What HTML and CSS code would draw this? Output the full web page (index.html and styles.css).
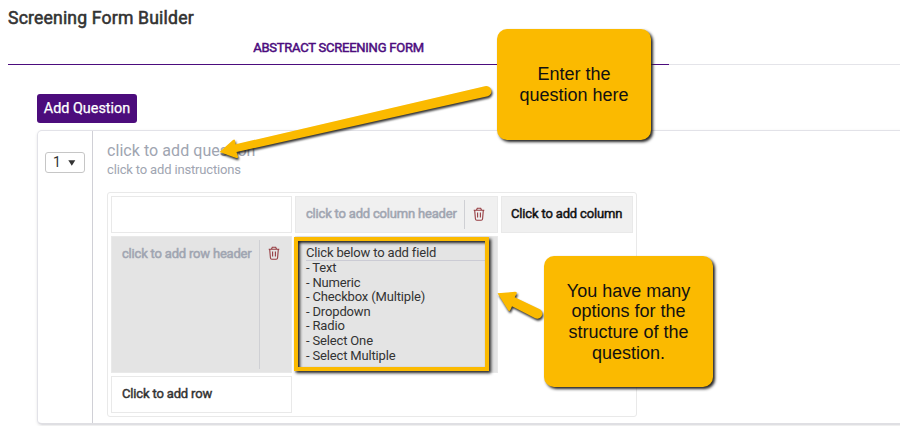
FILE: index.html
```html
<!DOCTYPE html>
<html lang="en">
<head>
<meta charset="utf-8">
<title>Screening Form Builder</title>
<link rel="stylesheet" href="styles.css">
</head>
<body>
<h1 class="title"><span>Screening Form Builder</span></h1>
<nav class="tabs"><div class="tab"><span>ABSTRACT SCREENING FORM</span></div></nav>
<button class="add"><span>Add Question</span></button>
<section class="card">
  <div class="order"><div class="select"><span>1</span><svg width="8" height="6" viewBox="0 0 8 6"><path d="M.3 .3h7L3.8 5.8z" fill="#333"/></svg></div></div>
  <div class="content">
    <div class="question"><span>click to add question</span></div>
    <div class="instructions"><span>click to add instructions</span></div>
    <div class="grid">
      <div class="cell"></div>
      <div class="cell head split">
        <div class="label muted"><span>click to add column header</span></div>
        <div class="trash"><svg width="12" height="14" viewBox="0 0 12 14"><path d="M.7 3.200h10.600M3.500 3L4.300 1.300h3.400L8.500 3M1.700 3.400l.7 8.300q.1 1.500 1.500 1.500h4.200q1.400 0 1.500-1.500l.7-8.300M4.600 5.400v5.200M7.400 5.400v5.200"/></svg></div>
      </div>
      <div class="cell head addcol"><span>Click to add column</span></div>
      <div class="cell body split">
        <div class="label muted"><span>click to add row header</span></div>
        <div class="trash"><svg width="12" height="14" viewBox="0 0 12 14"><path d="M.7 3.200h10.600M3.500 3L4.300 1.300h3.400L8.500 3M1.700 3.400l.7 8.300q.1 1.500 1.500 1.500h4.200q1.400 0 1.500-1.500l.7-8.300M4.600 5.400v5.200M7.400 5.400v5.200"/></svg></div>
      </div>
      <div class="cell body fields">
        <div class="fields-title"><span>Click below to add field</span></div>
        <div class="field">- Text</div>
        <div class="field">- Numeric</div>
        <div class="field">- Checkbox (Multiple)</div>
        <div class="field">- Dropdown</div>
        <div class="field">- Radio</div>
        <div class="field">- Select One</div>
        <div class="field">- Select Multiple</div>
        <div class="highlight"></div>
      </div>
      <div></div>
      <div class="cell addrow"><span>Click to add row</span></div>
    </div>
  </div>
</section>
<svg class="arrows" width="900" height="426" viewBox="0 0 900 426">
  <path d="M219.500 152L233 140Q234.600 138.600 235 140.500L235.600 144.300L484.800 86.200A5.100 5.100 0 0 1 487.700 96.200L236.500 152L238 156.500Q238.300 158.500 236.200 157.900Z"/>
  <path d="M497.500 293.300L515 291.800Q517.500 291.800 516.600 293.800L514.700 297.200L539.300 308.900A5.100 5.100 0 0 1 535.300 318.300L512 306.200L510.300 310Q509.300 312 508 310Z"/>
</svg>
<div class="callout first">Enter the<br>question here</div>
<div class="callout second">You have many<br>options for the<br>structure of the<br>question.</div>
</body>
</html>
```
FILE: styles.css
```css
* { box-sizing: border-box; }
body {
  margin: 0;
  width: 900px;
  height: 426px;
  overflow: hidden;
  position: relative;
  background: #fff;
  color: #333;
  font: 13px/15px Roboto, "Liberation Sans", sans-serif;
  letter-spacing: -.16px;
}
.title {
  margin: 0;
  padding: 7px 0 0 8px;
  height: 37px;
  font-size: 17.6px;
  font-weight: 400;
  line-height: 22px;
  letter-spacing: .18px;
  -webkit-text-stroke: .55px #333;
}
.tabs {
  margin-left: 8px;
  height: 28px;
  border-bottom: 1px solid #e4e4e9;
}
.tab {
  width: 661px;
  height: 28px;
  padding-top: 3px;
  text-align: center;
  color: #4c0c7e;
  letter-spacing: -.24px;
  border-bottom: 1px solid #4c0c7e;
  -webkit-text-stroke: .5px #4c0c7e;
}
.add {
  display: block;
  width: 100px;
  height: 29px;
  margin: 29px 0 7px 37px;
  padding: 0;
  border: 0;
  border-radius: 3px;
  background: #4c0c7c;
  color: #fff;
  font: 14.4px/28px Roboto, sans-serif;
  -webkit-text-stroke: .25px #fff;
}
.card {
  display: flex;
  margin-left: 37px;
  width: 875px;
  height: 295px;
  border: 1px solid #e2e2e8;
  border-bottom: 2px solid #dfdfe3;
  border-radius: 5px;
  box-shadow: 0 1px 3px rgba(0, 0, 0, .1);
}
.order {
  width: 55px;
  padding: 21px 0 0 7px;
  border-right: 1px solid #d0d0d6;
}
.select {
  display: flex;
  align-items: center;
  justify-content: space-between;
  width: 40px;
  height: 21px;
  padding: 0 8px 0 7px;
  border: 1px solid #c6c6c6;
  border-radius: 3px;
  font-size: 14px;
}
.content { padding: 9px 0 0 14px; }
.question {
  height: 21px;
  color: #a0a5b1;
  font-size: 16px;
  line-height: 21px;
  letter-spacing: .06px;
}
.instructions {
  height: 31px;
  color: #a0a5b1;
  line-height: 17px;
}
.grid {
  display: grid;
  grid-template-columns: 181px 203px 132px;
  grid-template-rows: 37px 137px 37px;
  gap: 3px;
  width: 530px;
  height: 225px;
  padding: 3px;
  border: 1px solid #e9e9e9;
  border-radius: 3px;
}
.cell { border: 1px solid #e9e9e9; }
.head { background: #f0f0f0; }
.body { background: #e4e4e4; }
.split { display: flex; padding: 3px 0; }
.label {
  flex: 1;
  padding: 6px 0 0 10px;
  border-right: 1px solid #cfd0d4;
  white-space: nowrap;
}
.muted {
  color: #a0a5b1;
  letter-spacing: -.19px;
  -webkit-text-stroke: .5px #a0a5b1;
}
.trash { width: 32px; padding: 7px 0 0 8px; }
.trash svg {
  display: block;
  fill: none;
  stroke: #963d42;
  stroke-width: 1.1;
}
.body .trash { width: 31px; padding-top: 6px; }
.addcol { padding: 9px 0 0 9px; color: #111; -webkit-text-stroke: .45px #111; }
.addrow { padding: 9px 0 0 10px; -webkit-text-stroke: .45px #333; }
.fields { position: relative; padding: 8px 12px 0 10px; }
.fields-title {
  height: 16px;
  border-bottom: 1px solid #cbcbd4;
}
.field { height: 14.6px; line-height: 14.6px; }
.highlight {
  position: absolute;
  left: -2px;
  top: 0;
  width: 195px;
  height: 134px;
  border: 4px solid #fbba00;
  box-shadow: 2px 2px 3px #222, inset 2px 2px 3px #222;
}
.arrows {
  position: absolute;
  left: 0;
  top: 0;
  fill: #fbba00;
  filter: drop-shadow(1.5px 2px 1.3px rgba(0, 0, 0, .8));
}
.callout {
  position: absolute;
  display: flex;
  align-items: center;
  justify-content: center;
  text-align: center;
  color: #111;
  background: #fbba00;
  border-radius: 10px;
  box-shadow: 2px 2px 3px #222;
  font: 18px/20.7px "Liberation Sans", Arial, sans-serif;
  letter-spacing: 0;
}
.first { left: 497px; top: 29px; width: 154px; height: 111px; }
.second { left: 544px; top: 256px; width: 169px; height: 131px; padding-top: 1px; }
```
